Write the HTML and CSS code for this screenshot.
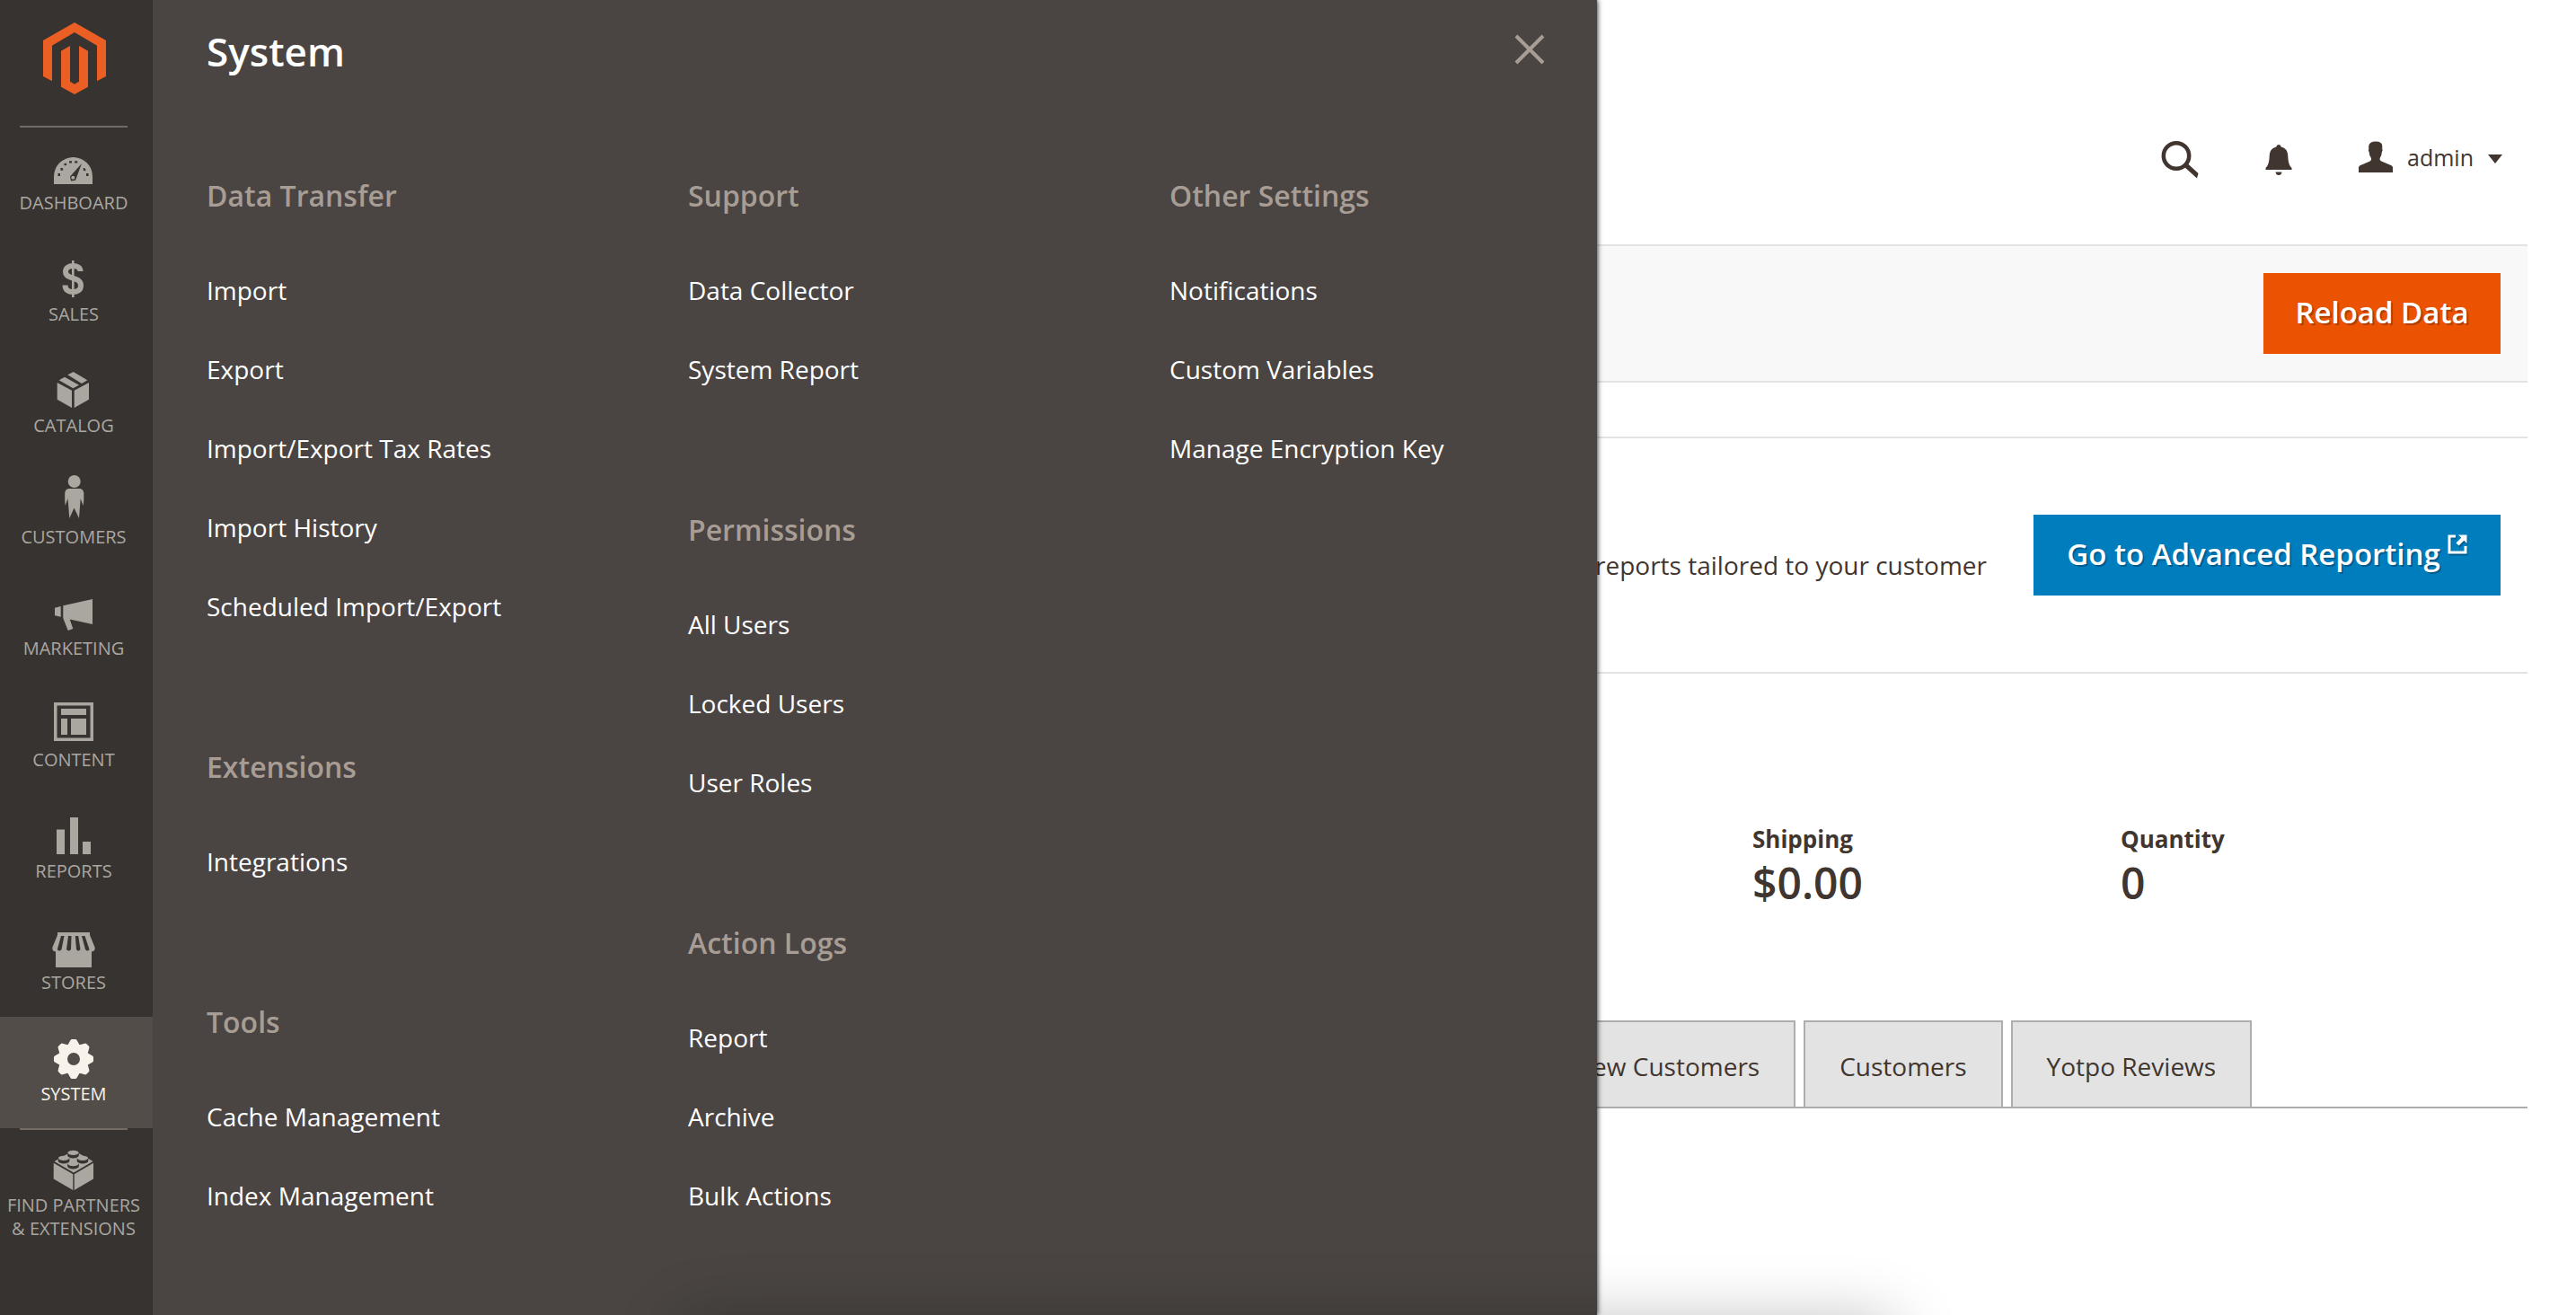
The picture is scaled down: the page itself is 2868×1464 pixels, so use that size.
FILE: index.html
```html
<!DOCTYPE html>
<html lang="en">
<head>
<meta charset="utf-8">
<title>Dashboard / Magento Admin</title>
<link rel="stylesheet" href="styles.css">
</head>
<body>
<nav class="sidebar" aria-label="Main menu">
  <a class="logo" href="#" aria-label="Magento">
    <svg viewBox="144 75 210 240" width="70" height="80"><path fill="#eb5f24" d="M249 75 354 135V255L324 271V152L249 108 174 152V271L144 255V135ZM204 170 234 153V272L249 281 264 272V153L294 170V290L249 315 204 290Z"/></svg>
  </a>
  <a class="nav-item ruled" href="#">
    <svg class="icon" viewBox="0 0 56 56"><path d="M6 48V39.500A21.500 21.500 0 0 1 49 39.500V48Z"/><g class="cut"><path d="M37 25 24 39.500 25 44.500 30 43.800Z"/><path d="M10.500 36h2.500v3h-2.500zM13 30.500l2.500-.8 1 2.500-2.500.8zM17 25.500l2.500-1 1 2-2.500 1zM23 22.200h3v2.200h-3zM29.200 22.200h3v2.200h-3zM38.500 30l2.500.5.500 2.700-2.500-.2zM42 36h2.500v3H42z"/></g><circle cx="27.300" cy="40.700" r="2"/></svg>
    <span>DASHBOARD</span></a>
  <a class="nav-item" href="#">
    <svg class="icon" viewBox="0 0 56 56"><path fill="none" stroke="currentColor" stroke-width="6" d="M35.500 21C35.500 17 32 15 27.300 15S19 17.500 19 21.500C19 31 36 26 36 37 36 42 32 44 27.300 44S18.500 42 18.500 36.500"/><path d="M26 9h2.600v41H26z"/></svg>
    <span>SALES</span></a>
  <a class="nav-item" href="#">
    <svg class="icon" viewBox="0 0 56 56"><path d="M9.700 21 26 29.700V49L9.700 39.700ZM28.700 29.700 45 21V39.700L28.700 49ZM11.700 18.300 18 14.700 34 23.700 27.300 27.300ZM21.300 12.300 27.700 9 43.300 18.300 37 22Z"/></svg>
    <span>CATALOG</span></a>
  <a class="nav-item" href="#">
    <svg class="icon" viewBox="0 0 56 56"><circle cx="28.700" cy="7" r="7"/><path d="M22 15H35.500Q39 16 39.300 20V28L38.600 34 35.700 26 34 48 28.500 36.500 23.300 48 21.500 26 18.600 34 18.200 28V20Q18.500 16 22 15Z"/></svg>
    <span>CUSTOMERS</span></a>
  <a class="nav-item" href="#">
    <svg class="icon" viewBox="0 0 56 56"><path d="M7 23.700 13.700 22V33.700L7 32.300ZM16.300 21.300 49 14V42L23.700 36.600 27.300 47 21.700 49 16.300 35.300Z"/></svg>
    <span>MARKETING</span></a>
  <a class="nav-item" href="#">
    <svg class="icon" viewBox="0 0 56 56"><path fill-rule="evenodd" d="M6 5H50V48H6ZM9.500 8.500V44.500H46.500V8.500Z"/><path d="M14 12H42V19H14ZM14 23H21V41H14ZM25 23H42V41H25Z"/></svg>
    <span>CONTENT</span></a>
  <a class="nav-item" href="#">
    <svg class="icon" viewBox="0 0 56 56"><path d="M9 22.500H18V50H9ZM24 9H33V50H24ZM38 36H47V50H38Z"/></svg>
    <span>REPORTS</span></a>
  <a class="nav-item" href="#">
    <svg class="icon" viewBox="0 0 56 56"><path d="M10 13H46V16L51.700 30Q52 34 48 34.500V52H8V34.500Q4 34 4.300 30L10 16Z"/><g class="cut"><path d="M14 17H17.500L14.500 32Q12 35 9.800 32ZM22 17H25.500L25 32Q22.500 35 20 32ZM29.800 17H33.200L35.500 32Q33 35 31 32ZM37 17H40.500L45.500 32Q43.500 35 41 32Z"/></g></svg>
    <span>STORES</span></a>
  <a class="nav-item active" href="#" aria-current="page">
    <svg class="icon" viewBox="-28 -30 56 56"><circle r="11.800" fill="none" stroke="currentColor" stroke-width="9.600"/><g id="teeth"><path id="tooth" d="M-7-15-3.500-21Q-3-22-2-22H2Q3-22 3.500-21L7-15Z"/><use href="#tooth" transform="rotate(45)"/><use href="#tooth" transform="rotate(90)"/><use href="#tooth" transform="rotate(135)"/></g><use href="#teeth" transform="rotate(180)"/></svg>
    <span>SYSTEM</span></a>
  <a class="nav-item ruled" href="#">
    <svg class="icon" viewBox="0 0 56 56"><path d="M5.700 21.800 27.300 34.200V52L5.700 39.500ZM28.700 34.200 50 21.800V39.500L28.700 52ZM6.500 20 14 15.500 28 8 42 15.500 49.500 20 28 32.500Z"/><g class="cut"><path d="M21.200 10V13.500A6.300 3 0 0 0 33.800 13.500V10ZM10.700 16V19.500A6.300 3 0 0 0 23.300 19.500V16ZM31.700 16V19.500A6.300 3 0 0 0 44.300 19.500V16ZM21.200 22.500V25.500A6.300 3 0 0 0 33.800 25.500V22.500Z"/></g><ellipse cx="27.500" cy="10.300" rx="6" ry="2.600"/><ellipse cx="17" cy="16.300" rx="6" ry="2.600"/><ellipse cx="38" cy="16.300" rx="6" ry="2.600"/><ellipse cx="27.500" cy="22.600" rx="6" ry="2.600"/></svg>
    <span>FIND PARTNERS<br>&amp; EXTENSIONS</span></a>
</nav>

<section class="submenu" aria-labelledby="submenu-title">
  <div class="submenu-head">
    <h1 id="submenu-title">System</h1>
    <button class="close" type="button" aria-label="Close"><svg viewBox="0 0 34 34" width="34" height="34"><path d="M2 2 32 32M32 2 2 32" stroke="currentColor" stroke-width="4" fill="none"/></svg></button>
  </div>
  <div class="columns">
    <div class="column">
      <div class="group"><h2>Data Transfer</h2>
        <ul><li><a href="#">Import</a></li><li><a href="#">Export</a></li><li><a href="#">Import/Export Tax Rates</a></li><li><a href="#">Import History</a></li><li><a href="#">Scheduled Import/Export</a></li></ul></div>
      <div class="group"><h2>Extensions</h2>
        <ul><li><a href="#">Integrations</a></li></ul></div>
      <div class="group"><h2>Tools</h2>
        <ul><li><a href="#">Cache Management</a></li><li><a href="#">Index Management</a></li></ul></div>
    </div>
    <div class="column">
      <div class="group"><h2>Support</h2>
        <ul><li><a href="#">Data Collector</a></li><li><a href="#">System Report</a></li></ul></div>
      <div class="group"><h2>Permissions</h2>
        <ul><li><a href="#">All Users</a></li><li><a href="#">Locked Users</a></li><li><a href="#">User Roles</a></li></ul></div>
      <div class="group"><h2>Action Logs</h2>
        <ul><li><a href="#">Report</a></li><li><a href="#">Archive</a></li><li><a href="#">Bulk Actions</a></li></ul></div>
    </div>
    <div class="column">
      <div class="group"><h2>Other Settings</h2>
        <ul><li><a href="#">Notifications</a></li><li><a href="#">Custom Variables</a></li><li><a href="#">Manage Encryption Key</a></li></ul></div>
    </div>
  </div>
</section>

<main class="page">
  <header class="header">
    <button class="tool" type="button" aria-label="Search"><svg viewBox="0 0 42 42" width="42" height="42"><circle cx="17" cy="16.500" r="14.200" fill="none" stroke="currentColor" stroke-width="4.500"/><path d="M25.500 28.500 29.500 25 41.500 36 40 41.500Z"/></svg></button>
    <button class="tool" type="button" aria-label="Notifications"><svg viewBox="0 0 30 34" width="30" height="34"><path d="M15 0Q17.500 0 17.700 2.500C23 4 25 7 25.300 13 25.600 20 27 23.500 29.500 26V28H.5V26C3 23.500 4.400 20 4.700 13 5 7 7 4 12.300 2.500Q12.500 0 15 0ZM11.500 30.500H18.500Q18 34 15 34T11.500 30.500Z"/></svg></button>
    <button class="tool account" type="button"><svg viewBox="0 0 38 36" width="38" height="36"><path d="M0 35V29.500Q0 28 1.500 27.300L11.500 23Q15 21.500 13.700 18.500 11.800 16 11.700 12.500L10.800 10Q11.500 9 11.200 6 11.500.5 19 .5T26.300 6Q26 9 26.700 10L25.800 12.500Q25.700 16 23.900 18.500 22.500 21.500 26.500 23L36.500 27.300Q38 28 38 29.500V35Z"/></svg><span>admin</span><svg class="caret" viewBox="0 0 16 10" width="16" height="10"><path d="M0 0H16L8 10Z"/></svg></button>
  </header>
  <div class="actions"><button class="button primary" type="button">Reload Data</button></div>
  <section class="reporting">
    <p>reports tailored to your customer</p>
    <a class="button secondary" href="#">Go to Advanced Reporting<svg viewBox="0 0 22 22" width="22" height="22"><path d="M9 2H2V20H20V13" fill="none" stroke="currentColor" stroke-width="3"/><path d="M12 .5H21.500V10L18.300 6.800 12.500 12.600 9.400 9.500 15.200 3.700Z"/></svg></a>
  </section>
  <dl class="totals">
    <div><dt>Shipping</dt><dd>$0.00</dd></div>
    <div><dt>Quantity</dt><dd>0</dd></div>
  </dl>
  <div class="tabs">
    <a class="tab" href="#">New Customers</a>
    <a class="tab" href="#">Customers</a>
    <a class="tab" href="#">Yotpo Reviews</a>
  </div>
</main>
<div class="dock-shadow"></div>
</body>
</html>
```
FILE: styles.css
```css
* { box-sizing: border-box; }

body {
  margin: 0;
  display: flex;
  min-height: 100vh;
  position: relative;
  overflow-x: hidden;
  background: #fff;
  color: #41362f;
  font-family: "Open Sans", "Noto Sans", sans-serif;
  font-size: 28px;
  line-height: 40px;
}

h1, h2, p, ul, dl, dd { margin: 0; padding: 0; }
ul { list-style: none; }
a { color: inherit; text-decoration: none; }
button { font: inherit; color: inherit; border: 0; background: none; padding: 0; cursor: pointer; }
svg { display: block; fill: currentColor; }

/* Sidebar */
.sidebar {
  flex: 0 0 170px;
  background: #373330;
  color: #aaa6a0;
}
.logo {
  display: flex;
  justify-content: center;
  height: 140px;
  padding: 25px 4px 0 0;
}
.nav-item {
  position: relative;
  display: flex;
  flex-direction: column;
  align-items: center;
  min-height: 124px;
  padding: 17px 6px 0 0;
  font-size: 20px;
  line-height: 26px;
  text-align: center;
  white-space: nowrap;
}
.nav-item.ruled::before {
  content: "";
  position: absolute;
  top: 0;
  left: 22px;
  width: 120px;
  height: 2px;
  background: #736963;
}
.nav-item.active { background: #524d49; color: #f7f3eb; }
.icon { width: 56px; height: 56px; }
.cut { fill: #373330; }

/* Flyout menu */
.submenu {
  flex: 0 0 1608px;
  z-index: 1;
  padding-top: 27px;
  background: #4a4542;
  color: #fff;
  box-shadow: 0 0 6px #000;
  clip-path: inset(0 -12px 0 0);
}
.submenu-head {
  display: flex;
  justify-content: space-between;
  align-items: center;
  padding: 0 58px 0 60px;
  margin-bottom: 109px;
}
.submenu-head h1 { font-size: 44px; line-height: 60px; font-weight: 600; }
.close { padding-bottom: 4px; color: #a79d95; }
.columns { display: grid; grid-template-columns: repeat(3, 1fr); }
.column { padding-left: 60px; }
.group { margin-bottom: 113px; }
.column .group:last-child { margin-bottom: 0; }
.group h2 {
  margin-bottom: 39px;
  color: #a79d95;
  font-size: 32px;
  line-height: 44px;
  font-weight: 600;
}
.group a { display: block; padding: 24px 0; }

/* Page */
.page { flex: 1; min-width: 0; padding-right: 54px; }
.header {
  display: flex;
  justify-content: flex-end;
  align-items: center;
  gap: 74px;
  height: 272px;
  padding: 84px 28px 0 0;
}
.account {
  display: flex;
  align-items: center;
  gap: 16px;
  padding-bottom: 6px;
  font-size: 25px;
}
.account .caret { margin-top: 4px; }
.actions {
  display: flex;
  justify-content: flex-end;
  padding: 30px;
  border-top: 2px solid #e3e3e3;
  border-bottom: 2px solid #e3e3e3;
  background: #f8f8f8;
}
.button {
  display: flex;
  justify-content: center;
  align-items: center;
  height: 90px;
  padding-bottom: 2px;
  color: #fff;
  font-size: 33px;
  font-weight: 600;
  text-shadow: 2px 2px 0 rgba(0, 0, 0, .25);
  white-space: nowrap;
}
.primary { min-width: 264px; background: #eb5202; }
.secondary { min-width: 520px; gap: 8px; background: #007dbd; }
.secondary svg { margin-bottom: 22px; filter: drop-shadow(1px 2px 0 rgba(0, 0, 0, .25)); }
.reporting {
  display: flex;
  justify-content: flex-end;
  align-items: center;
  gap: 52px;
  height: 264px;
  margin-top: 60px;
  padding-right: 30px;
  border-top: 2px solid #e3e3e3;
  border-bottom: 2px solid #e3e3e3;
}
.reporting p { margin-top: 22px; white-space: nowrap; }
.totals {
  display: grid;
  grid-template-columns: repeat(2, 410px);
  padding: 166px 0 122px 173px;
}
.totals dt { font-size: 26px; line-height: 36px; font-weight: 700; }
.totals dd { font-size: 48px; line-height: 62px; font-weight: 600; }
.tabs {
  display: flex;
  gap: 9px;
  overflow: hidden;
  border-bottom: 2px solid #adadad;
}
.tab {
  flex: none;
  padding: 29px 38px 25px;
  border: 2px solid #adadad;
  border-bottom: 0;
  background: #e3e3e3;
}
.tab:first-child { margin-left: -66px; }

/* Soft shadow along the bottom edge of the window */
.dock-shadow {
  position: absolute;
  z-index: 2;
  inset: auto 0 0;
  height: 120px;
  overflow: hidden;
  pointer-events: none;
}
.dock-shadow::after {
  content: "";
  position: absolute;
  top: 126px;
  left: 758px;
  right: 758px;
  height: 200px;
  border-radius: 20px;
  box-shadow: 0 0 70px rgba(0, 0, 0, .25);
}
```
